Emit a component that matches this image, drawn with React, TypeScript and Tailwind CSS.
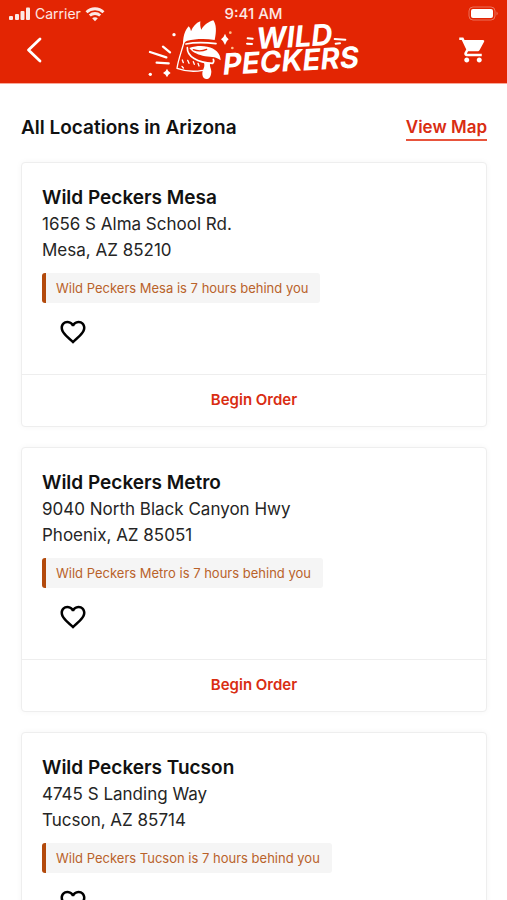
import { MdFavoriteBorder, MdShoppingCart } from "react-icons/md";

type Location = {
    name: string;
    street: string;
    city: string;
    hoursBehind: number;
};

const locations: Location[] = [
    { name: "Wild Peckers Mesa", street: "1656 S Alma School Rd.", city: "Mesa, AZ 85210", hoursBehind: 7 },
    { name: "Wild Peckers Metro", street: "9040 North Black Canyon Hwy", city: "Phoenix, AZ 85051", hoursBehind: 7 },
    { name: "Wild Peckers Tucson", street: "4745 S Landing Way", city: "Tucson, AZ 85714", hoursBehind: 7 },
];

function Logo() {
    return (
        <svg viewBox="18 54 648 192" role="img" aria-label="Wild Peckers" className="h-16 w-[216px] shrink-0">
            {/* Burst on the left */}
            <g stroke="#fff" strokeWidth="7" strokeLinecap="round" fill="none">
                <path d="M69 140 L90 157" />
                <path d="M30 156 L79 172" />
                <path d="M50 188 L86 190" />
            </g>
            <g fill="#fff">
                <circle cx="102" cy="104" r="5" />
                <circle cx="31" cy="223" r="5" />
                <path d="M81 206 Q84 215 92 219 Q84 223 81 232 Q78 223 69 219 Q78 215 81 206 Z" />
                <path d="M255 101 Q259 114 266 118 Q259 122 255 135 Q251 122 243 118 Q251 114 255 101 Z" />
            </g>
            <circle cx="271" cy="98" r="4" fill="#ffc08a" />
            <circle cx="277" cy="144" r="4" fill="#ffc08a" />

            {/* Comb */}
            <path
                d="M129 130 C130 104 136 91 146 79 C151 84 152 89 153 94 C158 80 168 69 181 64 C180 74 181 82 184 89 C192 74 207 65 220 61 C229 74 230 94 224 120 C195 115 165 117 142 122 C137 124 134 128 129 130 Z"
                fill="#fff"
            />
            {/* Head and neck outline */}
            <g fill="none" stroke="#fff" strokeWidth="4" strokeLinecap="round" strokeLinejoin="round">
                <path d="M132 126 C126 150 114 181 111 205 C133 213 162 216 188 211" />
                <path d="M138 132 C165 126 198 127 228 131" strokeWidth="5" />
                <path d="M127 180 L130 188 M143 181 L147 190 M160 185 L163 193 M174 190 L177 198" />
                <path d="M126 199 L130 204" />
            </g>
            {/* Beak */}
            <path
                d="M148 144 C168 137 186 137 202 140 C226 145 242 160 242 181 C226 167 208 172 188 167 C170 163 155 155 148 144 Z"
                fill="#fff"
            />
            <path d="M160 149 C174 154 188 153 200 148" fill="none" stroke="#e32503" strokeWidth="4" strokeLinecap="round" />
            <path
                d="M142 143 C141 169 172 188 218 190 C222 186 222 182 220 178"
                fill="none"
                stroke="#fff"
                strokeWidth="5"
                strokeLinecap="round"
                strokeLinejoin="round"
            />
            {/* Wattle */}
            <path d="M192 188 L211 188 C207 198 214 204 214 215 C213 231 207 237 199 237 C189 236 185 226 188 213 C191 204 195 199 192 188 Z" fill="#fff" />

            {/* Wordmark */}
            <g fill="#fff" fontFamily="Inter, sans-serif" fontWeight="700" fontStyle="italic">
                <text x="350" y="147" fontSize="88" transform="rotate(-3 350 147)">WILD</text>
                <text x="250" y="224" fontSize="88" transform="rotate(-3 250 224)">PECKERS</text>
            </g>
            <g stroke="#fff" strokeWidth="6" strokeLinecap="round">
                <path d="M323 115 L338 116 M321 131 L336 132" />
                <path d="M584 117 L616 119 M587 131 L600 130" />
            </g>
        </svg>
    );
}

function StatusBar() {
    return (
        <div className="grid h-7 grid-cols-3 items-center px-2 text-[15px] text-white/90">
            <div className="flex items-center gap-1">
                <svg viewBox="0 0 23 14" className="h-3.5 w-[23px]" fill="currentColor" aria-hidden="true">
                    <rect x="1" y="9" width="4" height="4" rx="1" />
                    <rect x="7" y="7" width="4" height="6" rx="1" />
                    <rect x="12.5" y="4" width="4" height="9" rx="1" />
                    <rect x="18" y="0.5" width="4" height="12.5" rx="1" />
                </svg>
                <span className="text-sm">Carrier</span>
                <svg viewBox="0 0 20 15" className="h-[15px] w-5" fill="none" stroke="currentColor" strokeWidth="2.8" aria-hidden="true">
                    <path d="M1.5 5.2 C6.2 0.6 13.8 0.6 18.5 5.2" />
                    <path d="M4.8 8.6 C7.8 5.8 12.2 5.8 15.2 8.6" />
                    <path d="M10 14.2 L7.2 11.3 C8.8 9.9 11.2 9.9 12.8 11.3 Z" fill="currentColor" stroke="none" />
                </svg>
            </div>
            <time className="text-center font-medium">9:41 AM</time>
            <div className="flex justify-end">
                <svg viewBox="0 0 31 16" className="h-4 w-[31px]" aria-hidden="true">
                    <rect x="1" y="1" width="26" height="13" rx="4" fill="none" stroke="#fff" strokeOpacity="0.35" />
                    <rect x="3" y="3" width="22" height="9" rx="2" fill="#fff" />
                    <path d="M28.5 5.5 Q31 7.5 28.5 9.5 Z" fill="#fff" fillOpacity="0.35" />
                </svg>
            </div>
        </div>
    );
}

function LocationCard({ location }: { location: Location }) {
    return (
        <article className="rounded-sm border border-[#eeeeee] bg-white shadow-[0_0_6px_rgba(0,0,0,0.04)]">
            <div className="px-5 pt-[22px] pb-[26px]">
                <h2 className="text-[19px] leading-[26px] font-semibold">{location.name}</h2>
                <address className="text-[17px] leading-[26px] text-[#252525] not-italic">
                    {location.street}
                    <br />
                    {location.city}
                </address>
                <p className="mt-2.5 w-fit rounded-[3px] border-l-4 border-[#b34a0c] bg-[#f5f5f5] pr-3 pl-2.5 text-[13px] leading-[30px] text-[#b9622a]">
                    {location.name} is {location.hoursBehind} hours behind you
                </p>
                <button
                    type="button"
                    aria-label={`Save ${location.name} as a favorite`}
                    className="mt-[13px] ml-[15px] flex size-8 items-center justify-center text-black"
                >
                    <MdFavoriteBorder aria-hidden="true" className="size-[30px]" />
                </button>
            </div>
            <button
                type="button"
                className="h-[52px] w-full border-t border-[#eeeeee] text-[15px] font-semibold text-[#d92d12]"
            >
                Begin Order
            </button>
        </article>
    );
}

export default function App() {
    return (
        <div className="min-h-screen bg-white pb-5 font-['Inter',sans-serif] text-[#111111]">
            <header className="border-b border-[#f9a898] bg-[#e32503]">
                <StatusBar />
                <div className="flex h-[55px] items-start justify-between px-4">
                    <button type="button" aria-label="Back" className="flex h-11 w-9 items-center justify-center text-white">
                        <svg viewBox="0 0 16 26" className="h-[26px] w-4" fill="none" stroke="currentColor" strokeWidth="2.8" strokeLinecap="round" strokeLinejoin="round" aria-hidden="true">
                            <path d="M14 2 L2.5 13 L14 24" />
                        </svg>
                    </button>
                    <div className="-mt-2.5">
                        <Logo />
                    </div>
                    <button type="button" aria-label="Cart" className="flex h-11 w-9 items-center justify-center text-white">
                        <MdShoppingCart aria-hidden="true" className="size-[30px]" />
                    </button>
                </div>
            </header>

            <main className="pt-[30px] pr-5 pl-[21px]">
                <div className="flex items-center justify-between">
                    <h1 className="text-[19px] leading-7 font-semibold">All Locations in Arizona</h1>
                    <a href="#map" className="border-b-2 border-[#e8543c] text-[17px] leading-6 font-semibold text-[#d92d12]">
                        View Map
                    </a>
                </div>
                <div className="mt-5 flex flex-col gap-5">
                    {locations.map((location) => (
                        <LocationCard key={location.name} location={location} />
                    ))}
                </div>
            </main>
        </div>
    );
}
